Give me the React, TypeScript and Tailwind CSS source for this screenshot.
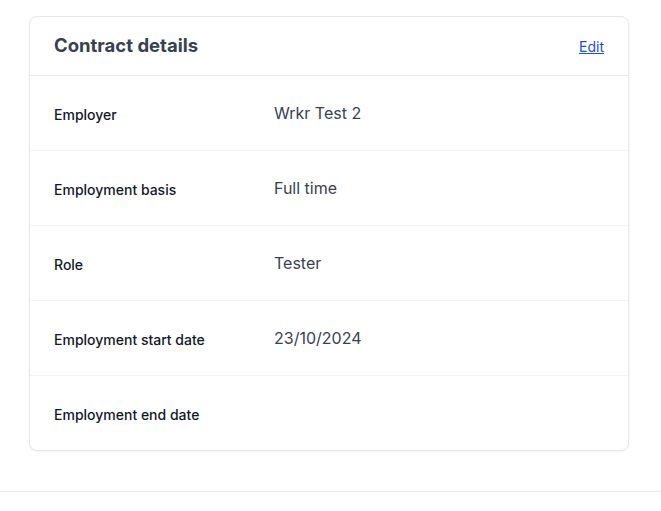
import React from 'react';

const rows = [
  { label: 'Employer', value: 'Wrkr Test 2' },
  { label: 'Employment basis', value: 'Full time' },
  { label: 'Role', value: 'Tester' },
  { label: 'Employment start date', value: '23/10/2024' },
  { label: 'Employment end date', value: '' },
];

const App = () => {
  return (
    <div className="w-[661px] min-h-[511px] bg-white font-['Inter',sans-serif]">
      <div className="pt-[16px] pl-[29px]">
        <div className="w-[600px] rounded-lg border border-[#e5e7eb] bg-white shadow-[0_1px_2px_rgba(0,0,0,0.05)]">
          <div className="flex h-[59px] items-center justify-between border-b border-[#e5e7eb] px-6">
            <h2 className="text-[18.5px] font-bold text-[#374151]">Contract details</h2>
            <a href="#" className="text-[14px] text-[#1d4ed8] underline">Edit</a>
          </div>
          {rows.map((row, i) => (
            <div
              key={row.label}
              className={`flex items-center px-6 ${i < rows.length - 1 ? 'h-[75px] border-b border-[#f3f4f6]' : 'h-[74px]'}`}
            >
              <div className="w-[220px] pt-[3px] text-[14px] font-medium text-[#111827]">{row.label}</div>
              <div className="text-[16px] text-[#374151]">{row.value}</div>
            </div>
          ))}
        </div>
      </div>
      <div className="mt-[40px] border-t border-[#e5e7eb]" />
    </div>
  );
};

export default App;
